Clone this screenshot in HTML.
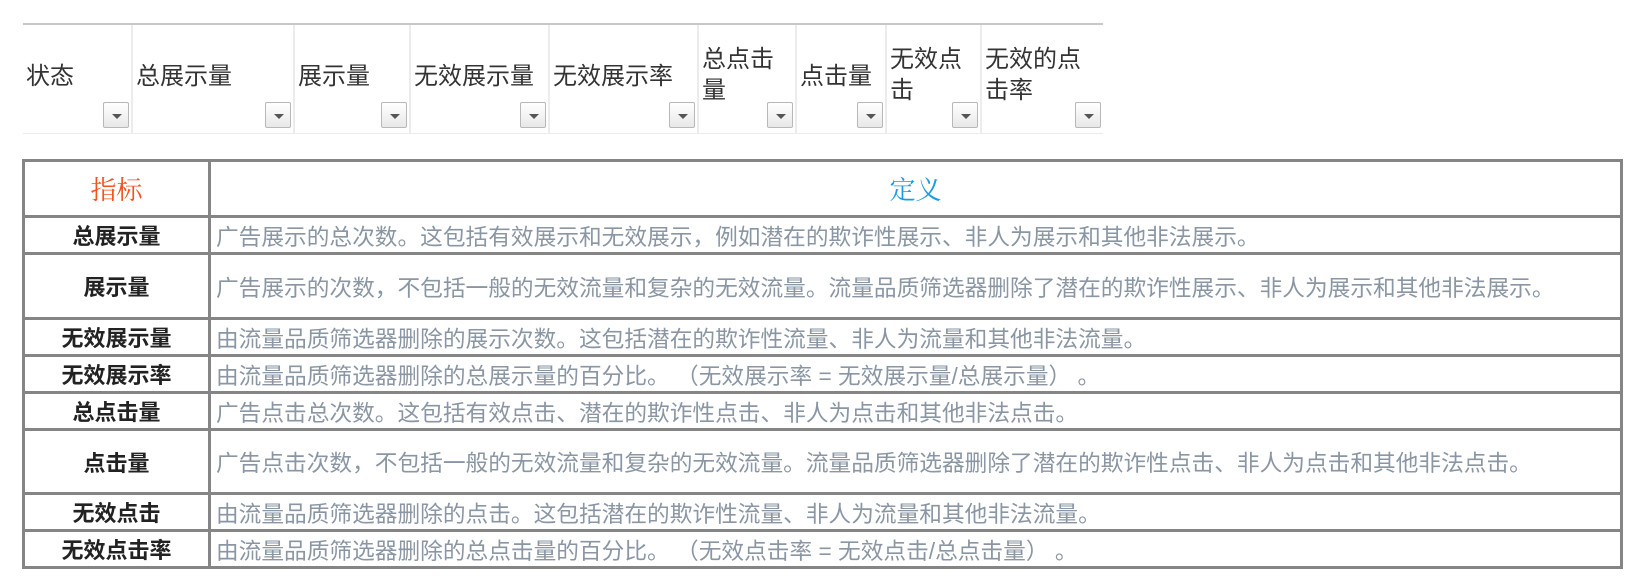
<!DOCTYPE html>
<html><head><meta charset="utf-8"><style>
body{margin:0;width:1647px;height:587px;background:#fff;position:relative;overflow:hidden;font-family:"Liberation Sans","Noto Sans CJK SC",sans-serif}
.hd{position:absolute;top:23px;left:23px;width:1080px;height:108px;border-top:2px solid #c8c8c8;border-bottom:1px solid #ececec}
.c{position:absolute;top:0;height:108px;border-right:2px solid #ececec;box-sizing:border-box}
.c span{position:absolute;left:3px;font-size:24px;color:#333;line-height:31px}
.dd{position:absolute;right:2px;top:77px;width:26px;height:26px;border:1px solid #b8b8b8;border-radius:2px;background:linear-gradient(#fff,#e8e8e8);box-sizing:border-box}
.dd:after{content:"";position:absolute;left:8px;top:11px;border-left:5px solid transparent;border-right:5px solid transparent;border-top:5px solid #555}
table{position:absolute;left:22px;top:159px;border-collapse:collapse;width:1601px}
td{border:3px solid #858585;padding:0 0 0 5px;font-size:22.7px;color:#8a96a3;white-space:nowrap}
td.l{width:183px;text-align:center;font-weight:bold;color:#222;font-size:22px;padding:0}
</style></head><body>
<div class="hd">
<div class="c" style="left:0;width:110px"><span style="top:36px">状态</span><div class="dd"></div></div>
<div class="c" style="left:110px;width:162px"><span style="top:36px">总展示量</span><div class="dd"></div></div>
<div class="c" style="left:272px;width:116px"><span style="top:36px">展示量</span><div class="dd"></div></div>
<div class="c" style="left:388px;width:139px"><span style="top:36px">无效展示量</span><div class="dd"></div></div>
<div class="c" style="left:527px;width:149px"><span style="top:36px">无效展示率</span><div class="dd"></div></div>
<div class="c" style="left:676px;width:98px"><span style="top:19px">总点击<br>量</span><div class="dd"></div></div>
<div class="c" style="left:774px;width:90px"><span style="top:36px">点击量</span><div class="dd"></div></div>
<div class="c" style="left:864px;width:95px"><span style="top:19px">无效点<br>击</span><div class="dd"></div></div>
<div class="c" style="left:959px;width:121px;border-right:none"><span style="top:19px">无效的点<br>击率</span><div class="dd"></div></div>
</div>
<table>
<tr style="height:56px"><td class="l" style="color:#f4511e;font-weight:normal;font-size:26px;font-family:'Liberation Serif','Noto Serif CJK SC',serif">指标</td><td style="text-align:center;color:#1a9be6;font-size:26px;font-family:'Liberation Serif','Noto Serif CJK SC',serif;padding:0">定义</td></tr>
<tr style="height:37px"><td class="l">总展示量</td><td>广告展示的总次数。这包括有效展示和无效展示，例如潜在的欺诈性展示、非人为展示和其他非法展示。</td></tr>
<tr style="height:65px"><td class="l">展示量</td><td>广告展示的次数，不包括一般的无效流量和复杂的无效流量。流量品质筛选器删除了潜在的欺诈性展示、非人为展示和其他非法展示。</td></tr>
<tr style="height:37px"><td class="l">无效展示量</td><td>由流量品质筛选器删除的展示次数。这包括潜在的欺诈性流量、非人为流量和其他非法流量。</td></tr>
<tr style="height:37px"><td class="l">无效展示率</td><td>由流量品质筛选器删除的总展示量的百分比。&nbsp;（无效展示率 = 无效展示量/总展示量）&nbsp;。</td></tr>
<tr style="height:37px"><td class="l">总点击量</td><td>广告点击总次数。这包括有效点击、潜在的欺诈性点击、非人为点击和其他非法点击。</td></tr>
<tr style="height:64px"><td class="l">点击量</td><td>广告点击次数，不包括一般的无效流量和复杂的无效流量。流量品质筛选器删除了潜在的欺诈性点击、非人为点击和其他非法点击。</td></tr>
<tr style="height:37px"><td class="l">无效点击</td><td>由流量品质筛选器删除的点击。这包括潜在的欺诈性流量、非人为流量和其他非法流量。</td></tr>
<tr style="height:37px"><td class="l">无效点击率</td><td>由流量品质筛选器删除的总点击量的百分比。&nbsp;（无效点击率 = 无效点击/总点击量）&nbsp;。</td></tr>
</table>
</body></html>
